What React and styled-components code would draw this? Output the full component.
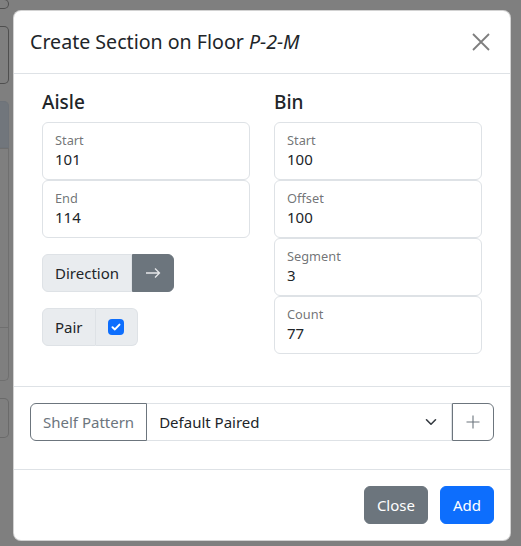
import React from "react";
import styled, { createGlobalStyle } from "styled-components";

const Global = createGlobalStyle`
  html, body { margin: 0; padding: 0; }
  body {
    width: 521px;
    height: 546px;
    overflow: hidden;
    background: #7f7f7f;
    font-family: "Noto Sans", "Open Sans", sans-serif;
    color: #212529;
    font-size: 15px;
  }
  * { box-sizing: border-box; }
`;

const Page = styled.div`
  position: relative;
  width: 521px;
  height: 546px;
`;

const BackStrip = styled.div`
  display: flex;
  flex-direction: column;
  width: 9px;
`;

const BackBox = styled.div`
  height: ${(p) => p.$h}px;
  margin-top: ${(p) => p.$mt || 0}px;
  border: 1px solid ${(p) => p.$border || "#4f4f4f"};
  border-left: none;
  border-radius: ${(p) => p.$radius || "0 5px 5px 0"};
  background: ${(p) => p.$bg || "transparent"};
`;

const Modal = styled.div`
  position: absolute;
  left: 13px;
  top: 10px;
  width: 498px;
  background: #fff;
  border: 1px solid rgba(0, 0, 0, 0.175);
  border-radius: 8px;
  display: flex;
  flex-direction: column;
`;

const Header = styled.div`
  display: flex;
  align-items: center;
  justify-content: space-between;
  padding: 16px;
  border-bottom: 1px solid #dee2e6;
`;

const Title = styled.h5`
  margin: 0;
  font-size: 19.6px;
  font-weight: 400;
  line-height: 30px;
`;

const CloseX = styled.button`
  width: 24px;
  height: 24px;
  padding: 0;
  margin-right: 1px;
  border: none;
  background: transparent;
  display: flex;
  align-items: center;
  justify-content: center;
  opacity: 0.5;
  color: #000;
`;

const Body = styled.div`
  padding: ${(p) => p.$pad || "16px"};
  border-bottom: 1px solid #dee2e6;
`;

const Container = styled.div`
  padding: 0 12px 16px;
  display: grid;
  grid-template-columns: 1fr 1fr;
  column-gap: 24px;
`;

const Column = styled.div`
  display: flex;
  flex-direction: column;
  align-items: flex-start;
`;

const SectionHead = styled.h5`
  margin: 0 0 8px;
  font-size: 19px;
  font-weight: 500;
  line-height: 24px;
`;

const Floating = styled.div`
  position: relative;
  width: 100%;
  height: 58px;
  border: 1px solid #dee2e6;
  border-radius: 6px;
  background: #fff;
`;

const FloatLabel = styled.span`
  position: absolute;
  left: 12px;
  top: 7px;
  font-size: 12.8px;
  line-height: 20px;
  color: rgba(33, 37, 41, 0.65);
`;

const FloatValue = styled.span`
  position: absolute;
  left: 12px;
  top: 24px;
  font-size: 15px;
  line-height: 24px;
  color: #212529;
`;

const Group = styled.div`
  display: flex;
  margin-top: ${(p) => p.$mt || 0}px;
  height: 38px;
`;

const GroupText = styled.span`
  display: flex;
  align-items: center;
  padding: 6px 12px;
  font-size: 15px;
  line-height: 24px;
  background: ${(p) => (p.$outline ? "#fff" : "#e9ecef")};
  color: ${(p) => (p.$outline ? "#6c757d" : "#212529")};
  border: 1px solid ${(p) => (p.$outline ? "#6c757d" : "#dee2e6")};
  border-radius: 6px 0 0 6px;
  white-space: nowrap;
`;

const GroupCell = styled.span`
  display: flex;
  align-items: center;
  justify-content: center;
  width: 42px;
  background: #e9ecef;
  border: 1px solid #dee2e6;
  border-left: none;
  border-radius: 0 6px 6px 0;
`;

const SecondaryBtn = styled.button`
  display: flex;
  align-items: center;
  justify-content: center;
  width: 42px;
  padding: 0;
  background: #6c757d;
  border: 1px solid #6c757d;
  border-radius: 0 6px 6px 0;
  color: #e6e8ea;
`;

const Check = styled.span`
  width: 16px;
  height: 16px;
  border-radius: 4px;
  background: #0d6efd;
  display: flex;
  align-items: center;
  justify-content: center;
`;

const Select = styled.div`
  flex: 1;
  display: flex;
  align-items: center;
  justify-content: space-between;
  padding: 6px 14px 6px 12px;
  border: 1px solid #dee2e6;
  border-left: none;
  font-size: 15px;
  line-height: 24px;
  color: #212529;
  background: #fff;
`;

const OutlineBtn = styled.button`
  display: flex;
  align-items: center;
  justify-content: center;
  width: 42px;
  padding: 0;
  background: #fff;
  border: 1px solid #6c757d;
  border-radius: 0 6px 6px 0;
  color: #6c757d;
`;

const Footer = styled.div`
  display: flex;
  justify-content: flex-end;
  padding: 12px;
  gap: 8px;
`;

const Button = styled.button`
  margin: 4px;
  margin-left: 0;
  padding: 6px 12px;
  font-family: inherit;
  font-size: 15px;
  line-height: 24px;
  border-radius: 6px;
  border: 1px solid ${(p) => p.$bg};
  background: ${(p) => p.$bg};
  color: #fff;
  &:last-child { margin-right: 4px; }
`;

const Field = ({ label, value }) => (
  <Floating>
    <FloatLabel>{label}</FloatLabel>
    <FloatValue>{value}</FloatValue>
  </Floating>
);

export default function App() {
  return (
    <Page>
      <Global />
      <BackStrip>
        <BackBox $h={10} $mt={-1} />
        <BackBox $h={58} $mt={17} />
        <BackBox $h={47} $mt={17} $border="#6e7379" $bg="#71767c" $radius="0 5px 0 0" />
        <BackBox $h={180} $border="#6f6f6f" $radius="0" />
        <BackBox $h={53} $border="#6f6f6f" $radius="0 0 5px 0" style={{ borderTop: "none" }} />
        <BackBox $h={40} $mt={17} $border="#6a6a6a" />
      </BackStrip>
      <Modal>
        <Header>
          <Title>
            Create Section on Floor <i>P-2-M</i>
          </Title>
          <CloseX aria-label="Close">
            <svg width="18" height="18" viewBox="0 0 18 18">
              <path d="M1 1L17 17M17 1L1 17" stroke="currentColor" strokeWidth="1.8" fill="none" />
            </svg>
          </CloseX>
        </Header>
        <Body>
          <Container>
            <Column>
              <SectionHead>Aisle</SectionHead>
              <Field label="Start" value="101" />
              <Field label="End" value="114" />
              <Group $mt={16}>
                <GroupText>Direction</GroupText>
                <SecondaryBtn>
                  <svg width="16" height="12" viewBox="0 0 16 12">
                    <path d="M1 6H14.5M10 1.5L14.5 6L10 10.5" stroke="currentColor" strokeWidth="1.3" fill="none" />
                  </svg>
                </SecondaryBtn>
              </Group>
              <Group $mt={16}>
                <GroupText>Pair</GroupText>
                <GroupCell>
                  <Check>
                    <svg width="10" height="8" viewBox="0 0 10 8">
                      <path d="M1.5 4.2L3.9 6.4L8.5 1.6" stroke="#fff" strokeWidth="2" fill="none" strokeLinecap="round" strokeLinejoin="round" />
                    </svg>
                  </Check>
                </GroupCell>
              </Group>
            </Column>
            <Column>
              <SectionHead>Bin</SectionHead>
              <Field label="Start" value="100" />
              <Field label="Offset" value="100" />
              <Field label="Segment" value="3" />
              <Field label="Count" value="77" />
            </Column>
          </Container>
        </Body>
        <Body $pad="16px 16px 28px">
          <Group>
            <GroupText $outline>Shelf Pattern</GroupText>
            <Select>
              <span>Default Paired</span>
              <svg width="12" height="8" viewBox="0 0 12 8">
                <path d="M1.5 1.8L6 6.2L10.5 1.8" stroke="#343a40" strokeWidth="1.6" fill="none" strokeLinecap="round" strokeLinejoin="round" />
              </svg>
            </Select>
            <OutlineBtn>
              <svg width="14" height="14" viewBox="0 0 14 14">
                <path d="M7 0.5V13.5M0.5 7H13.5" stroke="currentColor" strokeWidth="1.1" fill="none" />
              </svg>
            </OutlineBtn>
          </Group>
        </Body>
        <Footer>
          <Button $bg="#6c757d">Close</Button>
          <Button $bg="#0d6efd">Add</Button>
        </Footer>
      </Modal>
    </Page>
  );
}
